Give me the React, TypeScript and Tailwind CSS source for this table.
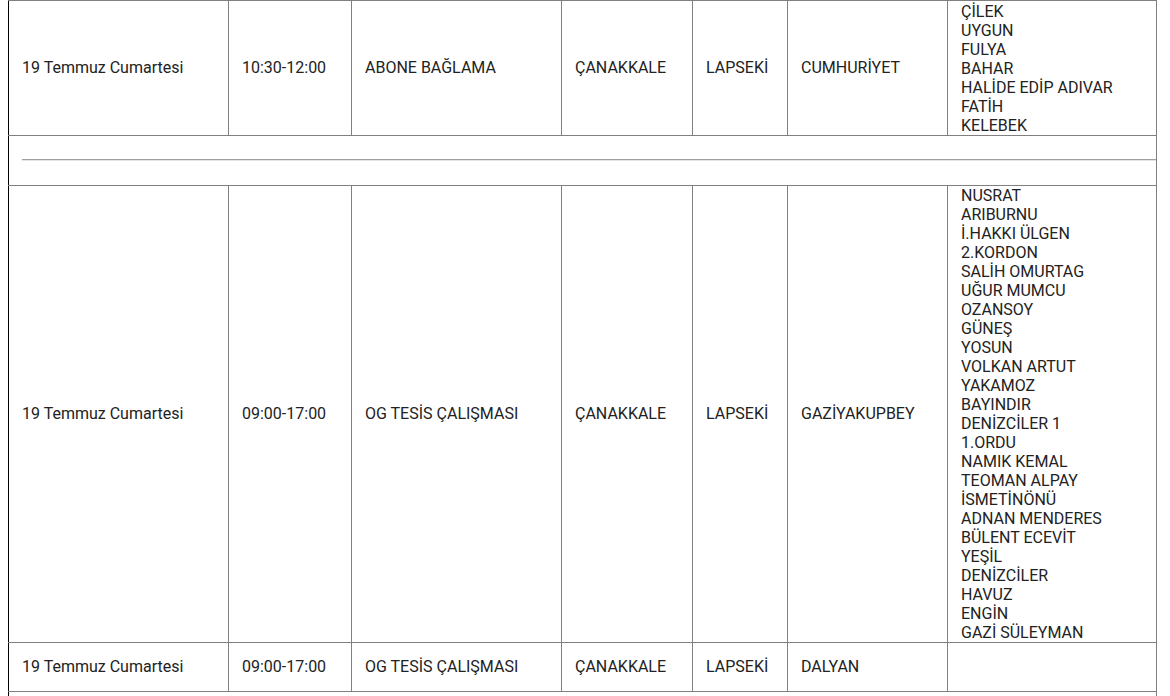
import React from 'react';

type Row = {
  date: string;
  time: string;
  type: string;
  il: string;
  ilce: string;
  mahalle: string;
  streets: string[];
};

const first: Row = {
  date: '19 Temmuz Cumartesi',
  time: '10:30-12:00',
  type: 'ABONE BAĞLAMA',
  il: 'ÇANAKKALE',
  ilce: 'LAPSEKİ',
  mahalle: 'CUMHURİYET',
  streets: ['ÇİLEK', 'UYGUN', 'FULYA', 'BAHAR', 'HALİDE EDİP ADIVAR', 'FATİH', 'KELEBEK'],
};

const second: Row[] = [
  {
    date: '19 Temmuz Cumartesi',
    time: '09:00-17:00',
    type: 'OG TESİS ÇALIŞMASI',
    il: 'ÇANAKKALE',
    ilce: 'LAPSEKİ',
    mahalle: 'GAZİYAKUPBEY',
    streets: [
      'NUSRAT', 'ARIBURNU', 'İ.HAKKI ÜLGEN', '2.KORDON', 'SALİH OMURTAG', 'UĞUR MUMCU',
      'OZANSOY', 'GÜNEŞ', 'YOSUN', 'VOLKAN ARTUT', 'YAKAMOZ', 'BAYINDIR', 'DENİZCİLER 1',
      '1.ORDU', 'NAMIK KEMAL', 'TEOMAN ALPAY', 'İSMETİNÖNÜ', 'ADNAN MENDERES', 'BÜLENT ECEVİT',
      'YEŞİL', 'DENİZCİLER', 'HAVUZ', 'ENGİN', 'GAZİ SÜLEYMAN',
    ],
  },
  {
    date: '19 Temmuz Cumartesi',
    time: '09:00-17:00',
    type: 'OG TESİS ÇALIŞMASI',
    il: 'ÇANAKKALE',
    ilce: 'LAPSEKİ',
    mahalle: 'DALYAN',
    streets: [],
  },
];

const cell = 'border border-[#808080] px-[13px] pt-[14px] pb-[15px] align-middle';

const DataRow: React.FC<{ row: Row; top?: boolean }> = ({ row, top }) => (
  <tr>
    <td className={`${cell} border-l-black`}>{row.date}</td>
    <td className={cell}>{row.time}</td>
    <td className={cell}>{row.type}</td>
    <td className={cell}>{row.il}</td>
    <td className={cell}>{row.ilce}</td>
    <td className={cell}>{row.mahalle}</td>
    <td className={`border border-[#808080] px-[13px] pb-0 align-middle ${top ? 'pt-[1px]' : 'pt-0'}`}>
      {row.streets.map((s) => (
        <div key={s}>{s}</div>
      ))}
    </td>
  </tr>
);

// colspan row holding a horizontal rule
const Divider: React.FC = () => (
  <tr>
    <td colSpan={7} className="border border-[#808080] border-l-black h-[50px] pl-[13px] pr-0 pt-[23px] pb-0 align-top">
      <div className="h-[2px] border-t border-[#a0a0a0] border-b border-b-[#e4e4e4]" />
    </td>
  </tr>
);

const App: React.FC = () => {
  return (
    <div className="min-h-screen bg-white pl-2 text-[16px] leading-[19px] text-[#222]" style={{ fontFamily: 'Roboto, "Noto Sans", sans-serif' }}>
      <table className="table-fixed border-collapse w-[1148px]">
        <colgroup>
          <col className="w-[220px]" />
          <col className="w-[123px]" />
          <col className="w-[210px]" />
          <col className="w-[131px]" />
          <col className="w-[95px]" />
          <col className="w-[160px]" />
          <col className="w-[209px]" />
        </colgroup>
        <tbody>
          <DataRow row={first} top />
          <Divider />
          {second.map((r) => (
            <DataRow key={r.mahalle} row={r} />
          ))}
          <Divider />
        </tbody>
      </table>
    </div>
  );
};

export default App;
